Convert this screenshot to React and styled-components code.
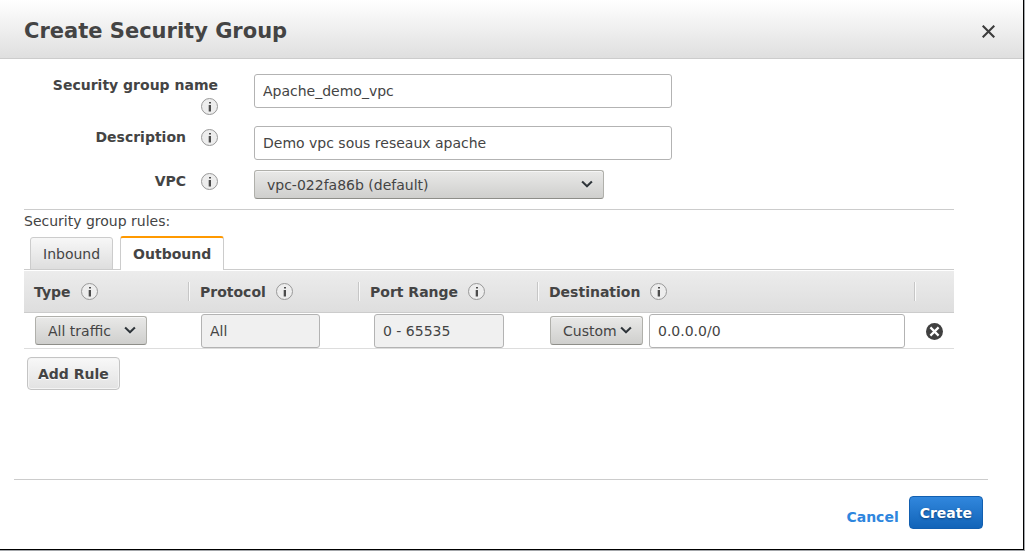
import React, { useState } from "react";
import styled, { createGlobalStyle, css } from "styled-components";

const GlobalStyle = createGlobalStyle`
  *, *::before, *::after { box-sizing: border-box; }
  body {
    margin: 0;
    font: 14px/21px "DejaVu Sans", Verdana, sans-serif;
    color: #444;
  }
  button, input, select { font: inherit; color: inherit; margin: 0; }
`;

const Backdrop = styled.div`
  min-height: 100vh;
  display: flex;
  padding: 0 1px 1px 0;
  background: #a3a6aa;
`;

const Dialog = styled.section`
  flex: 1;
  min-width: 0;
  display: flex;
  flex-direction: column;
  background: #fff;
  border: solid #000;
  border-width: 0 1px 1px 0;
`;

const Header = styled.header`
  display: flex;
  align-items: center;
  justify-content: space-between;
  height: 59px;
  padding: 5px 28px 0 24px;
  background: linear-gradient(#fff, #dfdfdf);
  border-bottom: 1px solid #ccc;
`;

const Title = styled.h1`
  margin: 0;
  padding-bottom: 1px;
  font-size: 21px;
  line-height: 24px;
`;

const IconButton = styled.button`
  display: flex;
  padding: 0;
  border: 0;
  background: none;
  cursor: pointer;
`;

const Content = styled.div`
  padding: 15px 69px 0 24px;
`;

const Form = styled.div`
  display: flex;
  flex-direction: column;
  gap: 10px;
  padding-bottom: 10px;
  border-bottom: 1px solid #ccc;
`;

const Field = styled.div`
  display: grid;
  grid-template-columns: 194px 1fr;
  column-gap: 36px;
  align-items: start;
`;

const FieldLabel = styled.label`
  display: flex;
  flex-wrap: wrap;
  justify-content: flex-end;
  align-items: center;
  column-gap: 15px;
  margin-bottom: -1px;
  padding-top: 1px;
  font-weight: bold;
`;

const InfoSlot = styled.span`
  display: flex;
  align-items: center;
  height: 21px;
`;

const TextInput = styled.input`
  display: block;
  width: ${(p) => p.$width};
  max-width: 100%;
  height: 34px;
  padding: 0 8px;
  border: 1px solid #b3b3b3;
  border-radius: 3px;
  background: #fff;
  &:read-only { background: #f0f0f0; }
`;

const SelectBox = styled.span`
  position: relative;
  display: block;
  flex: none;
  width: ${(p) => p.$width};
  max-width: 100%;
  svg {
    position: absolute;
    right: 11px;
    top: 10px;
    pointer-events: none;
  }
`;

const SelectInput = styled.select`
  appearance: none;
  display: block;
  width: 100%;
  height: 29px;
  padding: 2px 0 0 12px;
  border: 1px solid #b0b0ab;
  border-bottom-color: #8e8e89;
  border-radius: 3px;
  background: linear-gradient(#e9e9e8, #cfcfcd);
  box-shadow: inset 0 1px 0 #f6f6f6;
`;

const RulesTitle = styled.p`
  margin: 0 0 4px;
  padding-top: 1px;
`;

const TabList = styled.div`
  display: flex;
  align-items: flex-end;
  gap: 7px;
  height: 34px;
  padding-left: 6px;
  box-shadow: inset 0 -1px 0 #ccc;
`;

const Tab = styled.button`
  height: 33px;
  padding: 2px 12px 0;
  border: 1px solid #ccc;
  border-radius: 3px 3px 0 0;
  background: linear-gradient(#f7f7f7, #dedede);
  cursor: pointer;
  ${(p) =>
    p.$active &&
    css`
      height: 34px;
      padding-top: 0;
      border-top: 2px solid #f90;
      border-bottom: 0;
      background: #fff;
      font-weight: bold;
    `}
`;

const RulesTable = styled.table`
  width: 100%;
  margin-top: 1px;
  border-collapse: separate;
  border-spacing: 0;
  table-layout: fixed;
`;

const HeadCell = styled.th`
  width: ${(p) => p.$width};
  height: 42px;
  padding: 0;
  text-align: left;
  background: linear-gradient(#ececec, #dedede);
  border-bottom: 1px solid #ccc;
`;

const HeadLabel = styled.span`
  display: flex;
  align-items: center;
  gap: 10px;
  height: 19px;
  padding-left: 10px;
  white-space: nowrap;
  ${(p) =>
    p.$divided &&
    css`
      padding-left: 11px;
      border-left: 1px solid #c6c6c6;
      box-shadow: inset 1px 0 0 #fafafa;
    `}
`;

const HeadText = styled.span`
  padding-top: 2px;
`;

const Cell = styled.td`
  height: 36px;
  padding: 1px 0 0 ${(p) => p.$indent};
  border-bottom: 1px solid #ddd;
  ${SelectBox} { margin-bottom: 2px; }
`;

const CellGroup = styled.div`
  display: flex;
  align-items: center;
  gap: 6px;
  padding-right: 9px;
`;

const AddButton = styled.button`
  display: block;
  height: 33px;
  margin: 8px 0 0 3px;
  padding: 2px 10px 0;
  border: 1px solid #c4c4c4;
  border-radius: 4px;
  background: linear-gradient(#f8f8f8, #e2e2e2);
  box-shadow: inset 0 0 0 1px #f4f4f4;
  font-weight: bold;
  text-shadow: 0 1px 0 #fff;
  cursor: pointer;
`;

const Footer = styled.footer`
  display: flex;
  justify-content: flex-end;
  align-items: center;
  gap: 10px;
  margin: auto 35px 0 14px;
  padding: 16px 5px 20px 0;
  border-top: 1px solid #ccc;
  font-weight: bold;
`;

const CancelLink = styled.a`
  padding-top: 10px;
  color: #2e86de;
  text-decoration: none;
`;

const CreateButton = styled.button`
  height: 33px;
  padding: 2px 10px 0;
  border: 1px solid #125fb0;
  border-radius: 4px;
  background: linear-gradient(#3187dd, #1264b8);
  color: #fff;
  font-weight: bold;
  text-shadow: 0 1px 2px #0a3f7a;
  cursor: pointer;
`;

const InfoIcon = () => (
  <svg width="17" height="17" viewBox="0 0 17 17" aria-hidden="true">
    <circle cx="8.5" cy="8.5" r="8" fill="#ededed" stroke="#989898" />
    <path d="M8 4h2v1.6H8zM8 7h2v6.6H8z" fill="#4c4c4c" />
    <path d="M7 7h1v6.6H7z" fill="#4c4c4c" fillOpacity=".3" />
  </svg>
);

const CloseIcon = () => (
  <svg width="13" height="13" viewBox="0 0 13 13" aria-hidden="true">
    <path d="M.7.7l11.6 11.6M12.3.7L.7 12.3" stroke="#3c3c3c" strokeWidth="2.1" />
  </svg>
);

const RemoveIcon = () => (
  <svg width="17" height="17" viewBox="0 0 17 17" aria-hidden="true">
    <circle cx="8.5" cy="8.5" r="8.5" fill="#404040" />
    <path d="M4.4 4.4l8.2 8.2M12.6 4.4l-8.2 8.2" stroke="#fff" strokeWidth="2.2" />
  </svg>
);

const Chevron = () => (
  <svg width="12" height="9" viewBox="0 0 12 9" aria-hidden="true">
    <path d="M1 2.6l5 4.8 5-4.8" fill="none" stroke="#fff" strokeOpacity=".5" strokeWidth="2" />
    <path d="M1.1 1.5L6 6.3l4.9-4.8" fill="none" stroke="#30363b" strokeWidth="2.1" />
  </svg>
);

const Select = ({ width, options, ...rest }) => (
  <SelectBox $width={width}>
    <SelectInput {...rest}>
      {options.map((o) => (
        <option key={o}>{o}</option>
      ))}
    </SelectInput>
    <Chevron />
  </SelectBox>
);

const FormField = ({ id, label, children }) => (
  <Field>
    <FieldLabel htmlFor={id}>
      {label}
      <InfoSlot>
        <InfoIcon />
      </InfoSlot>
    </FieldLabel>
    {children}
  </Field>
);

const columns = [
  { label: "Type", width: "164px" },
  { label: "Protocol", width: "170px" },
  { label: "Port Range", width: "179px" },
  { label: "Destination" },
];

export default function App() {
  const [tab, setTab] = useState("Outbound");
  return (
    <>
      <GlobalStyle />
      <Backdrop>
        <Dialog role="dialog" aria-labelledby="dialog-title">
          <Header>
            <Title id="dialog-title">Create Security Group</Title>
            <IconButton aria-label="Close">
              <CloseIcon />
            </IconButton>
          </Header>
          <Content>
            <Form>
              <FormField id="name" label="Security group name">
                <TextInput id="name" $width="418px" defaultValue="Apache_demo_vpc" />
              </FormField>
              <FormField id="description" label="Description">
                <TextInput id="description" $width="418px" defaultValue="Demo vpc sous reseaux apache" />
              </FormField>
              <FormField id="vpc" label="VPC">
                <Select id="vpc" width="350px" options={["vpc-022fa86b (default)"]} />
              </FormField>
            </Form>
            <RulesTitle>Security group rules:</RulesTitle>
            <TabList role="tablist">
              {["Inbound", "Outbound"].map((name) => (
                <Tab
                  key={name}
                  role="tab"
                  aria-selected={tab === name}
                  $active={tab === name}
                  onClick={() => setTab(name)}
                >
                  {name}
                </Tab>
              ))}
            </TabList>
            <RulesTable>
              <thead>
                <tr>
                  {columns.map((c, i) => (
                    <HeadCell key={c.label} $width={c.width}>
                      <HeadLabel $divided={i > 0}>
                        <HeadText>{c.label}</HeadText>
                        <InfoIcon />
                      </HeadLabel>
                    </HeadCell>
                  ))}
                  <HeadCell $width="40px" aria-label="Remove">
                    <HeadLabel $divided />
                  </HeadCell>
                </tr>
              </thead>
              <tbody>
                <tr>
                  <Cell $indent="11px">
                    <Select width="112px" options={["All traffic"]} aria-label="Type" />
                  </Cell>
                  <Cell $indent="13px">
                    <TextInput $width="119px" readOnly defaultValue="All" aria-label="Protocol" />
                  </Cell>
                  <Cell $indent="16px">
                    <TextInput $width="130px" readOnly defaultValue="0 - 65535" aria-label="Port range" />
                  </Cell>
                  <Cell $indent="13px">
                    <CellGroup>
                      <Select width="93px" options={["Custom"]} aria-label="Destination type" />
                      <TextInput $width="100%" defaultValue="0.0.0.0/0" aria-label="Destination" />
                    </CellGroup>
                  </Cell>
                  <Cell $indent="12px">
                    <IconButton aria-label="Remove rule">
                      <RemoveIcon />
                    </IconButton>
                  </Cell>
                </tr>
              </tbody>
            </RulesTable>
            <AddButton>Add Rule</AddButton>
          </Content>
          <Footer>
            <CancelLink href="#cancel">Cancel</CancelLink>
            <CreateButton>Create</CreateButton>
          </Footer>
        </Dialog>
      </Backdrop>
    </>
  );
}
